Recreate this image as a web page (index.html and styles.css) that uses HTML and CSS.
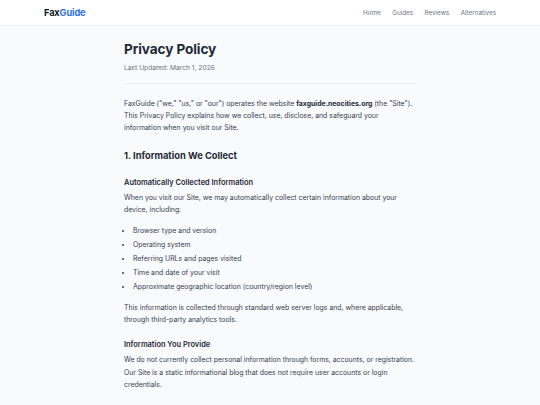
FILE: index.html
```html
<!DOCTYPE html>
<html lang="en">
<head>
  <meta charset="UTF-8" />
  <meta name="viewport" content="width=device-width, initial-scale=1.0"/>
  <title>Privacy Policy - FaxGuide</title>
  <link rel="stylesheet" href="styles.css">
</head>
<body>
  <header class="site-header">
    <a class="logo" href="#">Fax<span>Guide</span></a>
    <nav class="nav">
      <a href="#">Home</a>
      <a href="#">Guides</a>
      <a href="#">Reviews</a>
      <a href="#">Alternatives</a>
    </nav>
  </header>

  <main class="page">
    <div class="page-head">
      <h1>Privacy Policy</h1>
      <div class="updated">Last Updated: March 1, 2026</div>
    </div>

    <p>FaxGuide ("we," "us," or "our") operates the website <strong>faxguide.neocities.org</strong> (the "Site"). This Privacy Policy explains how we collect, use, disclose, and safeguard your information when you visit our Site.</p>

    <h2>1. Information We Collect</h2>

    <h3>Automatically Collected Information</h3>
    <p>When you visit our Site, we may automatically collect certain information about your device, including:</p>
    <ul>
      <li>Browser type and version</li>
      <li>Operating system</li>
      <li>Referring URLs and pages visited</li>
      <li>Time and date of your visit</li>
      <li>Approximate geographic location (country/region level)</li>
    </ul>
    <p>This information is collected through standard web server logs and, where applicable, through third-party analytics tools.</p>

    <h3>Information You Provide</h3>
    <p>We do not currently collect personal information through forms, accounts, or registration. Our Site is a static informational blog that does not require user accounts or login credentials.</p>
  </main>
</body>
</html>
```

FILE: styles.css
```css
* {
  margin: 0;
  padding: 0;
  box-sizing: border-box;
}
body {
  font-family: Inter, "Noto Sans", sans-serif;
  background: #f9fafb;
  color: #374151;
}
a {
  text-decoration: none;
}
.site-header {
  height: 26px;
  background: #fff;
  border-bottom: 1px solid #eef0f3;
  display: flex;
  align-items: center;
  justify-content: space-between;
  padding: 0 44px;
}
.logo {
  font-size: 9.2px;
  font-weight: 700;
  color: #111827;
  letter-spacing: -0.1px;
}
.logo span {
  color: #2f6fdf;
}
.nav {
  display: flex;
  gap: 11.5px;
}
.nav a {
  font-size: 6.3px;
  color: #6b7280;
}
.page {
  width: 292px;
  margin: 0 auto;
  padding-top: 13px;
}
.page-head {
  padding-bottom: 11px;
  border-bottom: 1px solid #eceef1;
  margin-bottom: 14px;
}
h1 {
  font-size: 13.6px;
  font-weight: 700;
  color: #1f2937;
  line-height: 20px;
  letter-spacing: -0.1px;
}
.updated {
  font-size: 6.7px;
  color: #6b7280;
  margin-top: 5px;
  line-height: 8px;
}
p {
  font-size: 6.9px;
  line-height: 12.2px;
  color: #374151;
  margin-bottom: 8px;
}
strong {
  font-weight: 700;
  color: #1f2937;
}
h2 {
  font-size: 9.3px;
  font-weight: 700;
  color: #1f2937;
  line-height: 14px;
  margin-top: 14px;
  margin-bottom: 14px;
}
h3 {
  font-size: 7.45px;
  font-weight: 600;
  color: #1f2937;
  line-height: 11px;
  margin-top: 13px;
  margin-bottom: 4px;
}
h2 + h3 {
  margin-top: 0;
}
ul {
  padding-left: 9px;
  margin-top: 7px;
  margin-bottom: 8px;
}
li {
  font-size: 6.9px;
  line-height: 14px;
  color: #374151;
}
```
